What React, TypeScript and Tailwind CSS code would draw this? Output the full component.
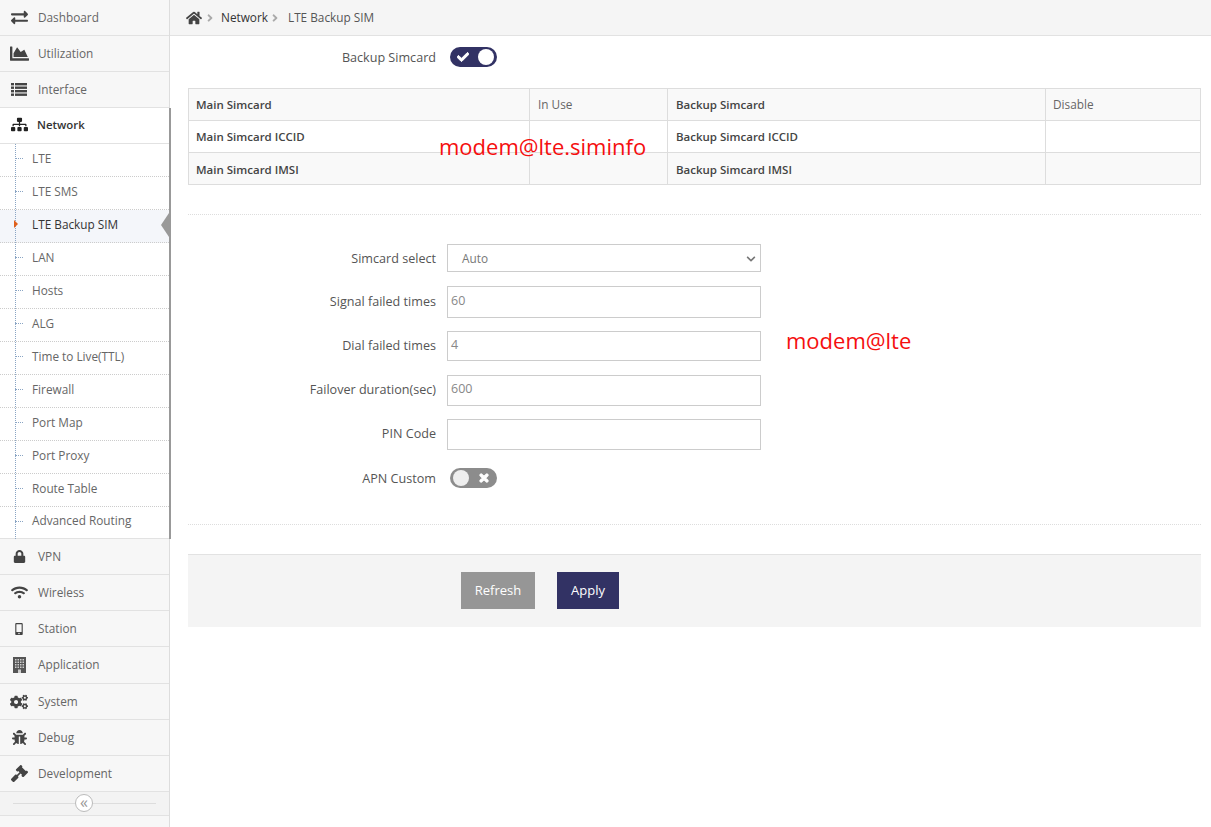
import React from 'react';
import {
  FaBug,
  FaChartArea,
  FaCheck,
  FaChevronDown,
  FaAngleRight,
  FaCogs,
  FaExchangeAlt,
  FaGavel,
  FaHome,
  FaLock,
  FaMobileAlt,
  FaSitemap,
  FaTimes,
  FaWifi,
} from 'react-icons/fa';

const ListIcon = () => (
  <svg width="16" height="13" viewBox="0 0 16 13" fill="currentColor">
    <rect x="0" y="0" width="3" height="2.4" />
    <rect x="4" y="0" width="12" height="2.4" />
    <rect x="0" y="3.5" width="3" height="2.4" />
    <rect x="4" y="3.5" width="12" height="2.4" />
    <rect x="0" y="7" width="3" height="2.4" />
    <rect x="4" y="7" width="12" height="2.4" />
    <rect x="0" y="10.5" width="3" height="2.4" />
    <rect x="4" y="10.5" width="12" height="2.4" />
  </svg>
);

// fa-building: dark block with a grid of small windows and a door
const BuildingIcon = () => (
  <svg width="13" height="16" viewBox="0 0 13 16">
    <rect width="13" height="16" fill="#555" />
    {[2, 4.5, 7, 9.5].map(y =>
      [2, 4.5, 7, 9.5].map(x => <rect key={`${x}-${y}`} x={x} y={y} width="1.5" height="1.5" fill="#cfcfcf" />),
    )}
    <rect x="5" y="12.5" width="3" height="3.5" fill="#cfcfcf" />
  </svg>
);

const topItems = [
  { label: 'Dashboard', icon: <FaExchangeAlt size={17} /> },
  { label: 'Utilization', icon: <FaChartArea size={19} /> },
  { label: 'Interface', icon: <ListIcon /> },
];

const subItems = [
  'LTE',
  'LTE SMS',
  'LTE Backup SIM',
  'LAN',
  'Hosts',
  'ALG',
  'Time to Live(TTL)',
  'Firewall',
  'Port Map',
  'Port Proxy',
  'Route Table',
  'Advanced Routing',
];

const bottomItems = [
  { label: 'VPN', icon: <FaLock size={13} />, h: 'h-[36px]' },
  { label: 'Wireless', icon: <FaWifi size={17} />, h: 'h-[36px]' },
  { label: 'Station', icon: <FaMobileAlt size={12} />, h: 'h-[36px]' },
  { label: 'Application', icon: <BuildingIcon />, h: 'h-[37px]' },
  { label: 'System', icon: <FaCogs size={18} />, h: 'h-[36px]' },
  { label: 'Debug', icon: <FaBug size={15} />, h: 'h-[36px]' },
  { label: 'Development', icon: <FaGavel size={17} />, h: 'h-[36px]' },
];

const MenuRow = ({ label, icon, h = 'h-[36px]' }: { label: string; icon: React.ReactNode; h?: string }) => (
  <div className={`flex ${h} items-center border-b border-[#e2e2e2] text-[11.8px] text-[#666]`}>
    <span className="flex w-[38px] shrink-0 justify-center text-[#444]">{icon}</span>
    <span>{label}</span>
  </div>
);

const SubRow = ({ label, active, last }: { label: string; active: boolean; last: boolean }) => (
  <div
    className={`relative flex items-center pb-[3px] pl-[32px] text-[11.8px] ${
      last ? 'h-[32px] border-b border-[#e2e2e2]' : 'h-[33px] border-b border-dotted border-[#ccc]'
    } ${active ? 'bg-[#f4f6fa] text-[#333]' : 'text-[#666]'}`}
  >
    {!active && (
      <span className="absolute top-[14px] left-[15px] h-0 w-[8px] border-t border-dotted border-[#8aa5c4]" />
    )}
    {active && (
      <span className="absolute top-[10px] left-[14px] z-20 h-0 w-0 border-y-[4px] border-l-[4px] border-y-transparent border-l-[#e0601c]" />
    )}
    {active && (
      <span className="absolute top-[3px] right-0 h-0 w-0 border-y-[12px] border-r-[8px] border-y-transparent border-r-[#999]" />
    )}
    {label}
  </div>
);

const Sidebar = () => (
  <aside className="flex w-[170px] shrink-0 flex-col border-r border-[#ddd] bg-[#f7f7f7]">
    {topItems.map(item => (
      <MenuRow key={item.label} {...item} />
    ))}
    <div className="relative z-10 -mr-[2px] border-r-2 border-[#999] bg-white">
      <div className="flex h-[36px] items-center border-b border-[#e2e2e2] pb-[2px] text-[11.4px] font-semibold text-[#333]">
        <span className="flex w-[37px] shrink-0 justify-center pl-[1px] text-[#222]">
          <FaSitemap size={17} />
        </span>
        Network
      </div>
      <div className="relative">
        <span className="absolute top-0 bottom-0 left-[15px] z-10 border-l border-dotted border-[#8aa5c4]" />
        {subItems.map((label, i) => (
          <SubRow
            key={label}
            label={label}
            active={label === 'LTE Backup SIM'}
            last={i === subItems.length - 1}
          />
        ))}
      </div>
    </div>
    {bottomItems.map(item => (
      <MenuRow key={item.label} {...item} />
    ))}
    <div className="relative flex h-[24px] items-center border-b border-[#e2e2e2] bg-[#f3f3f3] px-[13px]">
      <span className="h-px w-full bg-[#ddd]" />
      <span className="absolute top-[2px] left-[75px] flex h-[18px] w-[18px] items-center justify-center rounded-full border border-[#bbb] bg-white pb-[3px] text-[16px] leading-none text-[#999]">
        «
      </span>
    </div>
  </aside>
);

const Toggle = ({ on }: { on: boolean }) => (
  <span
    className={`flex h-[20px] w-[47px] items-center justify-between rounded-full px-[3px] text-white ${
      on ? 'bg-[#323264]' : 'bg-[#8c8c8c]'
    }`}
  >
    {on ? (
      <>
        <FaCheck size={12} className="ml-[4px]" stroke="currentColor" strokeWidth={40} />
        <span className="h-[16px] w-[16px] rounded-full bg-white" />
      </>
    ) : (
      <>
        <span className="h-[16px] w-[16px] rounded-full bg-[#eee]" />
        <FaTimes size={12} className="mr-[4px]" stroke="currentColor" strokeWidth={50} />
      </>
    )}
  </span>
);

const tableRows = [
  ['Main Simcard', 'In Use', 'Backup Simcard', 'Disable'],
  ['Main Simcard ICCID', '', 'Backup Simcard ICCID', ''],
  ['Main Simcard IMSI', '', 'Backup Simcard IMSI', ''],
];

const rowPadding = ['', 'pt-[1px]', 'pt-[3px]'];
const colPadding = ['pl-[7px]', 'pl-[8px]', 'pl-[8px]', 'pl-[7px]'];

const InfoTable = () => (
  <div className="relative">
    <table className="w-[1012px] table-fixed border-collapse border border-[#ddd] text-[11.8px] text-[#666]">
      <colgroup>
        <col className="w-[341px]" />
        <col className="w-[138px]" />
        <col className="w-[378px]" />
        <col className="w-[155px]" />
      </colgroup>
      <tbody>
        {tableRows.map((row, i) => (
          <tr key={row[0]} className={i === 1 ? 'h-[32px] bg-white' : 'h-[32px] bg-[#f9f9f9]'}>
            {row.map((cell, j) => (
              <td
                key={j}
                className={`border border-[#ddd] pr-[7px] ${colPadding[j]} ${rowPadding[i]} ${
                  j % 2 === 0 ? 'text-[11.5px] font-semibold text-[#444]' : ''
                }`}
              >
                {cell}
              </td>
            ))}
          </tr>
        ))}
      </tbody>
    </table>
    <span className="absolute top-[44px] left-[251px] text-[22px] leading-[28px] text-[#f50f0f]">
      modem@lte.siminfo
    </span>
  </div>
);

const TextField = ({ label, value, h }: { label: string; value?: string; h: string }) => (
  <div className="flex items-center">
    <label className="w-[248px] text-right text-[12.6px] text-[#555]">{label}</label>
    <div
      className={`ml-[11px] flex ${h} w-[314px] items-center border border-[#ccc] bg-white pb-[2px] pl-[3px] text-[12.5px] text-[#888]`}
    >
      {value}
    </div>
  </div>
);

export default function App() {
  return (
    <div className="flex h-[827px] w-[1211px] overflow-hidden bg-white font-['Open_Sans',sans-serif]">
      <Sidebar />
      <main className="min-w-0 flex-1">
        <nav className="flex h-[36px] items-center border-b border-[#e2e2e2] bg-[#f5f5f5] pl-[16px] text-[11.8px] text-[#555]">
          <FaHome size={16} className="text-[#444]" />
          <FaAngleRight size={12} className="mr-[5px] ml-[2px] text-[#aaa]" />
          <span className="text-[#333]">Network</span>
          <FaAngleRight size={12} className="ml-[1px] text-[#aaa]" />
          <span className="ml-[7px]">LTE Backup SIM</span>
        </nav>

        <div className="pr-[10px] pl-[18px]">
          <div className="flex h-[52px] items-start pt-[11px]">
            <span className="w-[248px] pt-[2px] text-right text-[12.6px] text-[#555]">Backup Simcard</span>
            <span className="ml-[14px]">
              <Toggle on />
            </span>
          </div>

          <InfoTable />

          <div className="mt-[29px] border-t border-dotted border-[#ddd]" />

          <div className="mt-[29px] flex flex-col">
            <div className="flex items-center">
              <label className="w-[248px] pt-[2px] text-right text-[12.6px] text-[#555]">Simcard select</label>
              <div className="ml-[11px] flex h-[28px] w-[314px] items-center justify-between border border-[#ccc] bg-white pt-[1px] pr-[4px] pl-[14px] text-[11.8px] text-[#777]">
                Auto
                <FaChevronDown size={10} className="text-[#777]" />
              </div>
            </div>
            <div className="mt-[14px] flex flex-col">
              <TextField label="Signal failed times" value="60" h="h-[32px]" />
              <div className="relative mt-[13px]">
                <TextField label="Dial failed times" value="4" h="h-[30px]" />
                <span className="absolute top-[-5px] left-[598px] text-[22px] leading-[28px] text-[#f50f0f]">
                  modem@lte
                </span>
              </div>
              <div className="mt-[14px]">
                <TextField label="Failover duration(sec)" value="600" h="h-[31px]" />
              </div>
              <div className="mt-[13px]">
                <TextField label="PIN Code" h="h-[31px]" />
              </div>
            </div>
            <div className="mt-[18px] flex items-center">
              <label className="w-[248px] pt-[2px] text-right text-[12.6px] text-[#555]">APN Custom</label>
              <span className="ml-[14px]">
                <Toggle on={false} />
              </span>
            </div>
          </div>

          <div className="mt-[35px] border-t border-dotted border-[#ddd]" />

          <div className="mt-[29px] flex h-[73px] items-start gap-[22px] border-t border-[#e2e2e2] bg-[#f4f4f4] pt-[17px] pl-[273px]">
            <button className="h-[37px] w-[74px] bg-[#969696] text-[13px] text-white">Refresh</button>
            <button className="h-[37px] w-[62px] bg-[#323264] text-[13px] text-white">Apply</button>
          </div>
        </div>
      </main>
    </div>
  );
}
